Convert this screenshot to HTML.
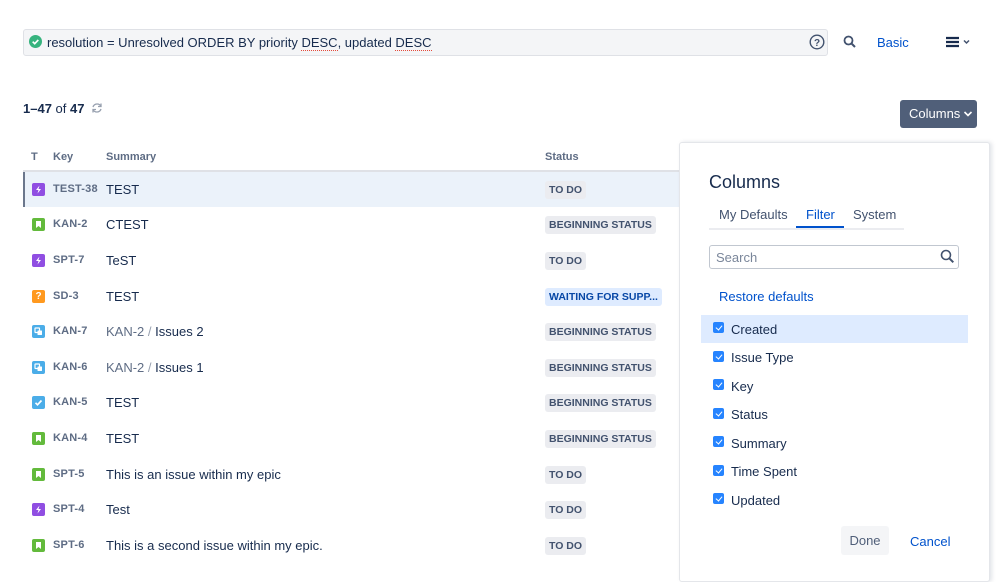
<!DOCTYPE html>
<html><head><meta charset="utf-8"><style>
*{box-sizing:border-box;margin:0;padding:0}
body{width:999px;height:570px;overflow:hidden;background:#fff;font-family:"Liberation Sans",sans-serif;color:#172b4d;position:relative}
.a{position:absolute}
.row{position:absolute;left:23px;width:656px;height:35px}
.ic{position:absolute;left:9px;top:11px;width:13px;height:13px;border-radius:2px}
.key{position:absolute;left:30px;top:11px;font-size:11px;font-weight:bold;color:#5e6c84;letter-spacing:.2px}
.sum{position:absolute;left:83px;top:10px;font-size:13px;color:#172b4d}
.loz{position:absolute;left:522px;top:9px;height:18px;line-height:18px;padding:0 4px;font-size:10.5px;font-weight:bold;background:#ebecf0;color:#42526e;border-radius:3px}
.cb{position:absolute;left:713px;width:11px;height:11px;background:#2684ff;border-radius:2px}
.cb:after{content:"";position:absolute;left:3.5px;top:1.5px;width:3px;height:5px;border:solid #fff;border-width:0 1.5px 1.5px 0;transform:rotate(40deg)}
.cl{position:absolute;left:731px;font-size:13px;color:#172b4d}
.u{border-bottom:1.5px dotted #e5493a}
</style></head><body>
<svg width="0" height="0" style="position:absolute"><defs>
<symbol id="bolt" viewBox="0 0 13 13"><path d="M7.5 2.5L4 7h2.5L5.5 10.5 9 6H6.5z" fill="#fff"/></symbol>
<symbol id="story" viewBox="0 0 13 13"><path d="M4 3h5v7L6.5 8 4 10z" fill="#fff"/></symbol>
<symbol id="sub" viewBox="0 0 13 13"><rect x="3" y="3" width="4.5" height="4.5" rx=".5" fill="none" stroke="#fff" stroke-width="1.2"/><rect x="5.5" y="5.5" width="4.5" height="4.5" rx=".5" fill="#fff"/></symbol>
<symbol id="task" viewBox="0 0 13 13"><path d="M3.5 6.8l2 2 4-4.3" fill="none" stroke="#fff" stroke-width="1.7"/></symbol>
</defs></svg>
<div class="a" style="left:23px;top:29px;width:805px;height:27px;background:#f4f5f7;border:1px solid #dfe1e6;border-radius:3px"></div>
<svg class="a" style="left:29px;top:35px" width="13" height="13"><circle cx="6.5" cy="6.5" r="6.5" fill="#36b37e"/><path d="M3.7 6.7l2 2 3.6-3.8" stroke="#fff" stroke-width="1.7" fill="none"/></svg>
<div class="a" style="left:47px;top:35px;font-size:13px">resolution = Unresolved ORDER BY priority <span class="u">DESC</span>, updated <span class="u">DESC</span></div>
<svg class="a" style="left:809px;top:34px" width="16" height="16"><circle cx="8" cy="8" r="6.8" stroke="#42526e" stroke-width="1.4" fill="none"/><text x="8" y="12" font-size="10" font-weight="bold" text-anchor="middle" fill="#42526e" font-family="Liberation Sans">?</text></svg>
<svg class="a" style="left:843px;top:35px" width="14" height="14"><circle cx="5.5" cy="5.5" r="4" stroke="#42526e" stroke-width="1.8" fill="none"/><path d="M8.5 8.5l3.5 3.5" stroke="#42526e" stroke-width="2"/></svg>
<div class="a" style="left:877px;top:35px;font-size:13px;color:#0052cc">Basic</div>
<svg class="a" style="left:945px;top:36px" width="28" height="12"><path d="M1 2h13M1 6h13M1 10h13" stroke="#172b4d" stroke-width="2.2"/><path d="M19 4.5l2.5 2.5L24 4.5" stroke="#42526e" stroke-width="1.5" fill="none"/></svg>

<div class="a" style="left:23px;top:101px;font-size:13px"><b>1–47</b> of <b>47</b></div>
<svg class="a" style="left:91px;top:102px" width="12" height="12"><path d="M10 4.5A4.3 4.3 0 0 0 2 5M2 7.5A4.3 4.3 0 0 0 10 7" stroke="#97a0af" stroke-width="1.3" fill="none"/><path d="M10 1.5v3H7M2 10.5v-3h3" stroke="#97a0af" stroke-width="1.3" fill="none"/></svg>
<div class="a" style="left:900px;top:100px;width:77px;height:28px;background:#505f79;border-radius:3px;color:#fff;font-size:13px;line-height:28px;padding-left:9px">Columns</div>
<svg class="a" style="left:963px;top:110px" width="10" height="8"><path d="M1.5 2l3.5 3.5L8.5 2" stroke="#fff" stroke-width="1.6" fill="none"/></svg>

<div class="a" style="left:31px;top:151px;font-size:11px;font-weight:bold;color:#5e6c84">T</div>
<div class="a" style="left:53px;top:151px;font-size:11px;font-weight:bold;color:#5e6c84">Key</div>
<div class="a" style="left:106px;top:151px;font-size:11px;font-weight:bold;color:#5e6c84">Summary</div>
<div class="a" style="left:545px;top:151px;font-size:11px;font-weight:bold;color:#5e6c84">Status</div>
<div class="a" style="left:23px;top:170px;width:656px;height:2px;background:#dfe1e6"></div>

<div class="row" style="top:172px;background:#ebf2fa;border-left:2px solid #6b778c"><svg class="ic" style="background:#904ee2;left:7px"><use href="#bolt"/></svg><div class="key" style="left:28px">TEST-38</div><div class="sum" style="left:81px">TEST</div><div class="loz" style="left:520px">TO DO</div></div>
<div class="row" style="top:207px"><svg class="ic" style="background:#63ba3c"><use href="#story"/></svg><div class="key">KAN-2</div><div class="sum">CTEST</div><div class="loz">BEGINNING STATUS</div></div>
<div class="row" style="top:243px"><svg class="ic" style="background:#904ee2"><use href="#bolt"/></svg><div class="key">SPT-7</div><div class="sum">TeST</div><div class="loz">TO DO</div></div>
<div class="row" style="top:279px"><div class="ic" style="background:#ff991f;color:#fff;font-size:10px;font-weight:bold;text-align:center;line-height:13px">?</div><div class="key">SD-3</div><div class="sum">TEST</div><div class="loz" style="background:#deebff;color:#0747a6">WAITING FOR SUPP...</div></div>
<div class="row" style="top:314px"><svg class="ic" style="background:#4bade8"><use href="#sub"/></svg><div class="key">KAN-7</div><div class="sum"><span style="color:#5e6c84">KAN-2</span> <span style="color:#97a0af">/</span> Issues 2</div><div class="loz">BEGINNING STATUS</div></div>
<div class="row" style="top:350px"><svg class="ic" style="background:#4bade8"><use href="#sub"/></svg><div class="key">KAN-6</div><div class="sum"><span style="color:#5e6c84">KAN-2</span> <span style="color:#97a0af">/</span> Issues 1</div><div class="loz">BEGINNING STATUS</div></div>
<div class="row" style="top:385px"><svg class="ic" style="background:#4bade8"><use href="#task"/></svg><div class="key">KAN-5</div><div class="sum">TEST</div><div class="loz">BEGINNING STATUS</div></div>
<div class="row" style="top:421px"><svg class="ic" style="background:#63ba3c"><use href="#story"/></svg><div class="key">KAN-4</div><div class="sum">TEST</div><div class="loz">BEGINNING STATUS</div></div>
<div class="row" style="top:457px"><svg class="ic" style="background:#63ba3c"><use href="#story"/></svg><div class="key">SPT-5</div><div class="sum">This is an issue within my epic</div><div class="loz">TO DO</div></div>
<div class="row" style="top:492px"><svg class="ic" style="background:#904ee2"><use href="#bolt"/></svg><div class="key">SPT-4</div><div class="sum">Test</div><div class="loz">TO DO</div></div>
<div class="row" style="top:528px"><svg class="ic" style="background:#63ba3c"><use href="#story"/></svg><div class="key">SPT-6</div><div class="sum">This is a second issue within my epic.</div><div class="loz">TO DO</div></div>

<div class="a" style="left:679px;top:142px;width:311px;height:440px;background:#fff;border:1px solid #e4e6ea;border-radius:3px;box-shadow:2px 0 4px rgba(9,30,66,.12)"></div>
<div class="a" style="left:709px;top:172px;font-size:18px;color:#172b4d">Columns</div>
<div class="a" style="left:709px;top:228px;width:195px;height:2px;background:#ebecf0"></div>
<div class="a" style="left:719px;top:207px;font-size:13px;color:#42526e">My Defaults</div>
<div class="a" style="left:806px;top:207px;font-size:13px;color:#0052cc">Filter</div>
<div class="a" style="left:796px;top:226px;width:48px;height:2px;background:#0052cc"></div>
<div class="a" style="left:853px;top:207px;font-size:13px;color:#42526e">System</div>
<div class="a" style="left:709px;top:245px;width:250px;height:24px;border:1px solid #c1c7d0;border-radius:3px;background:#fff"></div>
<div class="a" style="left:716px;top:250px;font-size:13px;color:#7a869a">Search</div>
<svg class="a" style="left:940px;top:249px" width="15" height="15"><circle cx="6" cy="6" r="4.5" stroke="#42526e" stroke-width="1.6" fill="none"/><path d="M9.3 9.3l4 4" stroke="#42526e" stroke-width="2"/></svg>
<div class="a" style="left:719px;top:289px;font-size:13px;color:#0052cc">Restore defaults</div>
<div class="a" style="left:701px;top:315px;width:267px;height:28px;background:#deebff"></div>
<div class="cb" style="top:322px"></div><div class="cl" style="top:322px">Created</div>
<div class="cb" style="top:351px"></div><div class="cl" style="top:350px">Issue Type</div>
<div class="cb" style="top:379px"></div><div class="cl" style="top:379px">Key</div>
<div class="cb" style="top:408px"></div><div class="cl" style="top:407px">Status</div>
<div class="cb" style="top:436px"></div><div class="cl" style="top:436px">Summary</div>
<div class="cb" style="top:465px"></div><div class="cl" style="top:464px">Time Spent</div>
<div class="cb" style="top:493px"></div><div class="cl" style="top:493px">Updated</div>
<div class="a" style="left:841px;top:526px;width:48px;height:29px;background:#f4f5f7;border-radius:3px;font-size:13px;color:#505f79;text-align:center;line-height:29px">Done</div>
<div class="a" style="left:910px;top:534px;font-size:13px;color:#0052cc">Cancel</div>
</body></html>
